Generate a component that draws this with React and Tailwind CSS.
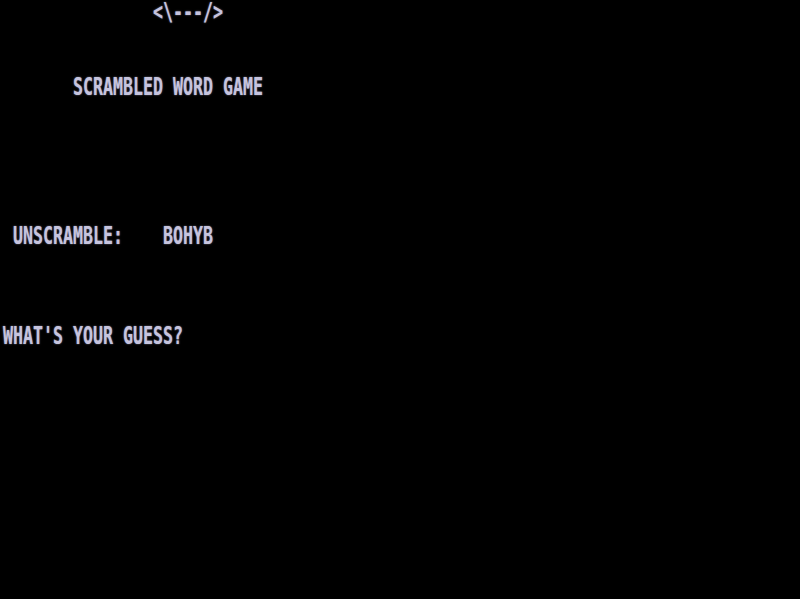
import React from 'react';

const lines = [
  '               <\\---/>',
  '',
  '',
  '       SCRAMBLED WORD GAME',
  '',
  '',
  '',
  '',
  '',
  ' UNSCRAMBLE:    BOHYB',
  '',
  '',
  '',
  "WHAT'S YOUR GUESS?",
];

const App = () => {
  return (
    <div className="w-[800px] h-[599px] bg-black overflow-hidden pl-[3px]">
      <div className="font-['DejaVu_Sans_Mono',monospace] font-bold text-[24px] leading-[24.9px] text-[#c6c4de] [text-shadow:0_0_2px_rgba(190,190,230,0.7)]">
        {lines.map((line, i) => (
          <div key={i} className="h-[24.9px] w-max whitespace-pre origin-left scale-x-[0.692]">
            {line}
          </div>
        ))}
      </div>
    </div>
  );
};

export default App;
